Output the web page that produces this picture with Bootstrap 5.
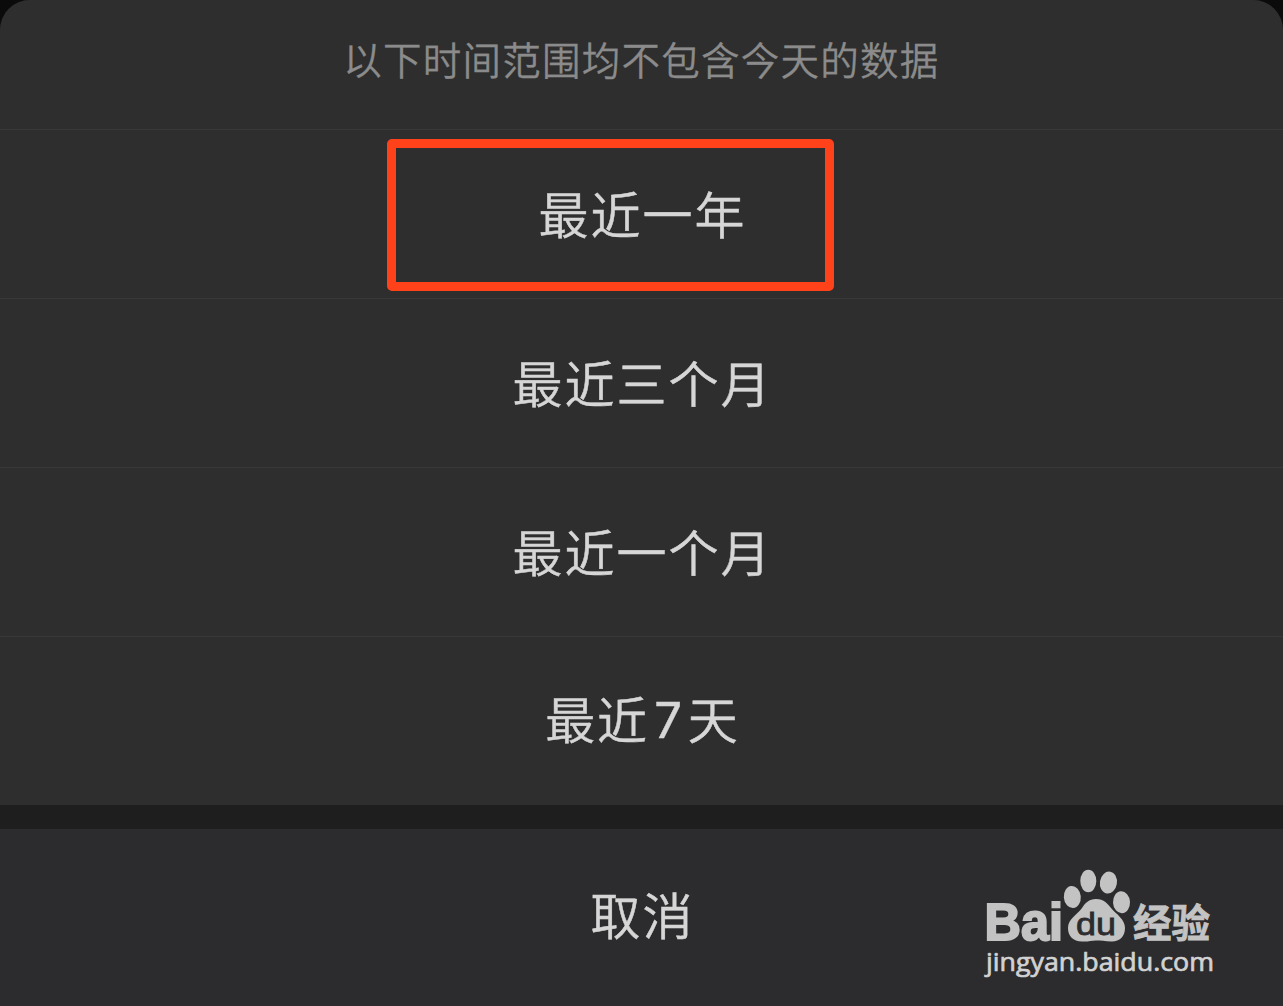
<!DOCTYPE html>
<html lang="zh-CN">
<head>
    <meta charset="UTF-8">
    <meta name="viewport" content="width=device-width, initial-scale=1.0">
    <title>选择时间范围</title>
    <link href="https://cdn.jsdelivr.net/npm/bootstrap@5.3.0/dist/css/bootstrap.min.css" rel="stylesheet">
    <style>
        body { background: #0b0b0b; font-family: "Noto Sans CJK SC", sans-serif; }
        .sheet { height: 1006px; background: #1e1e1e; border-radius: 30px 30px 0 0; }
        .sheet-title { height: 130px; padding-bottom: 12px; background: #2e2e2e; border-bottom: 1px solid #383838; color: #8b8b8b; font-size: 38.5px; font-weight: 350; letter-spacing: 1.25px; -webkit-text-stroke: .3px; }
        .sheet .option { height: 169px; padding: 0 0 5px 2px; background: #2e2e2e; border: 0; border-bottom: 1px solid #383838; border-radius: 0; color: #d6d6d6; font-size: 50px; font-weight: 350; line-height: 1; letter-spacing: 2px; -webkit-text-stroke: .5px; }
        .sheet .option:last-child { height: 168px; border-bottom: 0; }
        .sheet .cancel { margin-top: 24px; height: 177px; background: #2c2c2e; padding-bottom: 10px; border: 0; }
        .days { margin: 0 4px 0 5px; font-family: Inter, sans-serif; font-size: 49px; font-weight: 400; line-height: 1; vertical-align: 1px; }
        .highlight { left: 387px; top: 9px; width: 447px; height: 152px; border: 9px solid #ff421a; border-radius: 5px; }
        .watermark { left: 970px; top: 855px; }
    </style>
</head>
<body>
    <div class="sheet position-relative overflow-hidden d-flex flex-column">
        <div class="sheet-title d-flex align-items-center justify-content-center">以下时间范围均不包含今天的数据</div>

        <!-- Options -->
        <div class="d-flex flex-column">
            <button class="btn option position-relative">最近一年<span class="highlight position-absolute"></span></button>
            <button class="btn option">最近三个月</button>
            <button class="btn option">最近一个月</button>
            <button class="btn option">最近<span class="days">7</span>天</button>
        </div>

        <button class="btn option cancel">取消</button>

        <!-- Logo -->
        <svg class="watermark position-absolute" width="260" height="140" viewBox="0 0 260 140" fill="#c3c3c3">
            <text x="14.500" y="84.500" font-family="Liberation Sans" font-weight="700" font-size="51" textLength="78.500" lengthAdjust="spacingAndGlyphs" stroke="#c3c3c3" stroke-width="2">Bai</text>
            <ellipse cx="102.300" cy="42" rx="8.500" ry="11" transform="rotate(-5 102 42)"/>
            <ellipse cx="118.300" cy="26" rx="8" ry="11.300"/>
            <ellipse cx="138.500" cy="27.500" rx="8.500" ry="11" transform="rotate(9 138 27)"/>
            <ellipse cx="151.500" cy="47.300" rx="8.500" ry="11" transform="rotate(-3 151 47)"/>
            <path d="M126 44C134 44 138 49 141 53C146 59 155 64 155 73C155 82 149 87 141 86.500C135 86 131 85.500 126 85.500C121 85.500 118 87 112 86.500C103 86.500 98 81 98 73C98 64 107 60 112 53C115 48 119 44 126 44Z"/>
            <text x="106" y="79.500" font-family="Liberation Sans" font-weight="400" font-size="32" textLength="40" lengthAdjust="spacingAndGlyphs" fill="#2c2c2e" stroke="#2c2c2e" stroke-width=".8">du</text>
            <text x="163" y="81.500" font-family="Noto Sans CJK SC" font-weight="700" font-size="39" textLength="77" lengthAdjust="spacingAndGlyphs" stroke="#c3c3c3" stroke-width=".8">经验</text>
            <text x="16" y="115.500" font-family="Open Sans, Noto Sans" font-weight="500" font-size="26" textLength="228" lengthAdjust="spacingAndGlyphs" fill="#d2d2d2" stroke="#d2d2d2" stroke-width=".7">jingyan.baidu.com</text>
        </svg>
    </div>

    <script src="https://cdn.jsdelivr.net/npm/bootstrap@5.3.0/dist/js/bootstrap.bundle.min.js"></script>
</body>
</html>
